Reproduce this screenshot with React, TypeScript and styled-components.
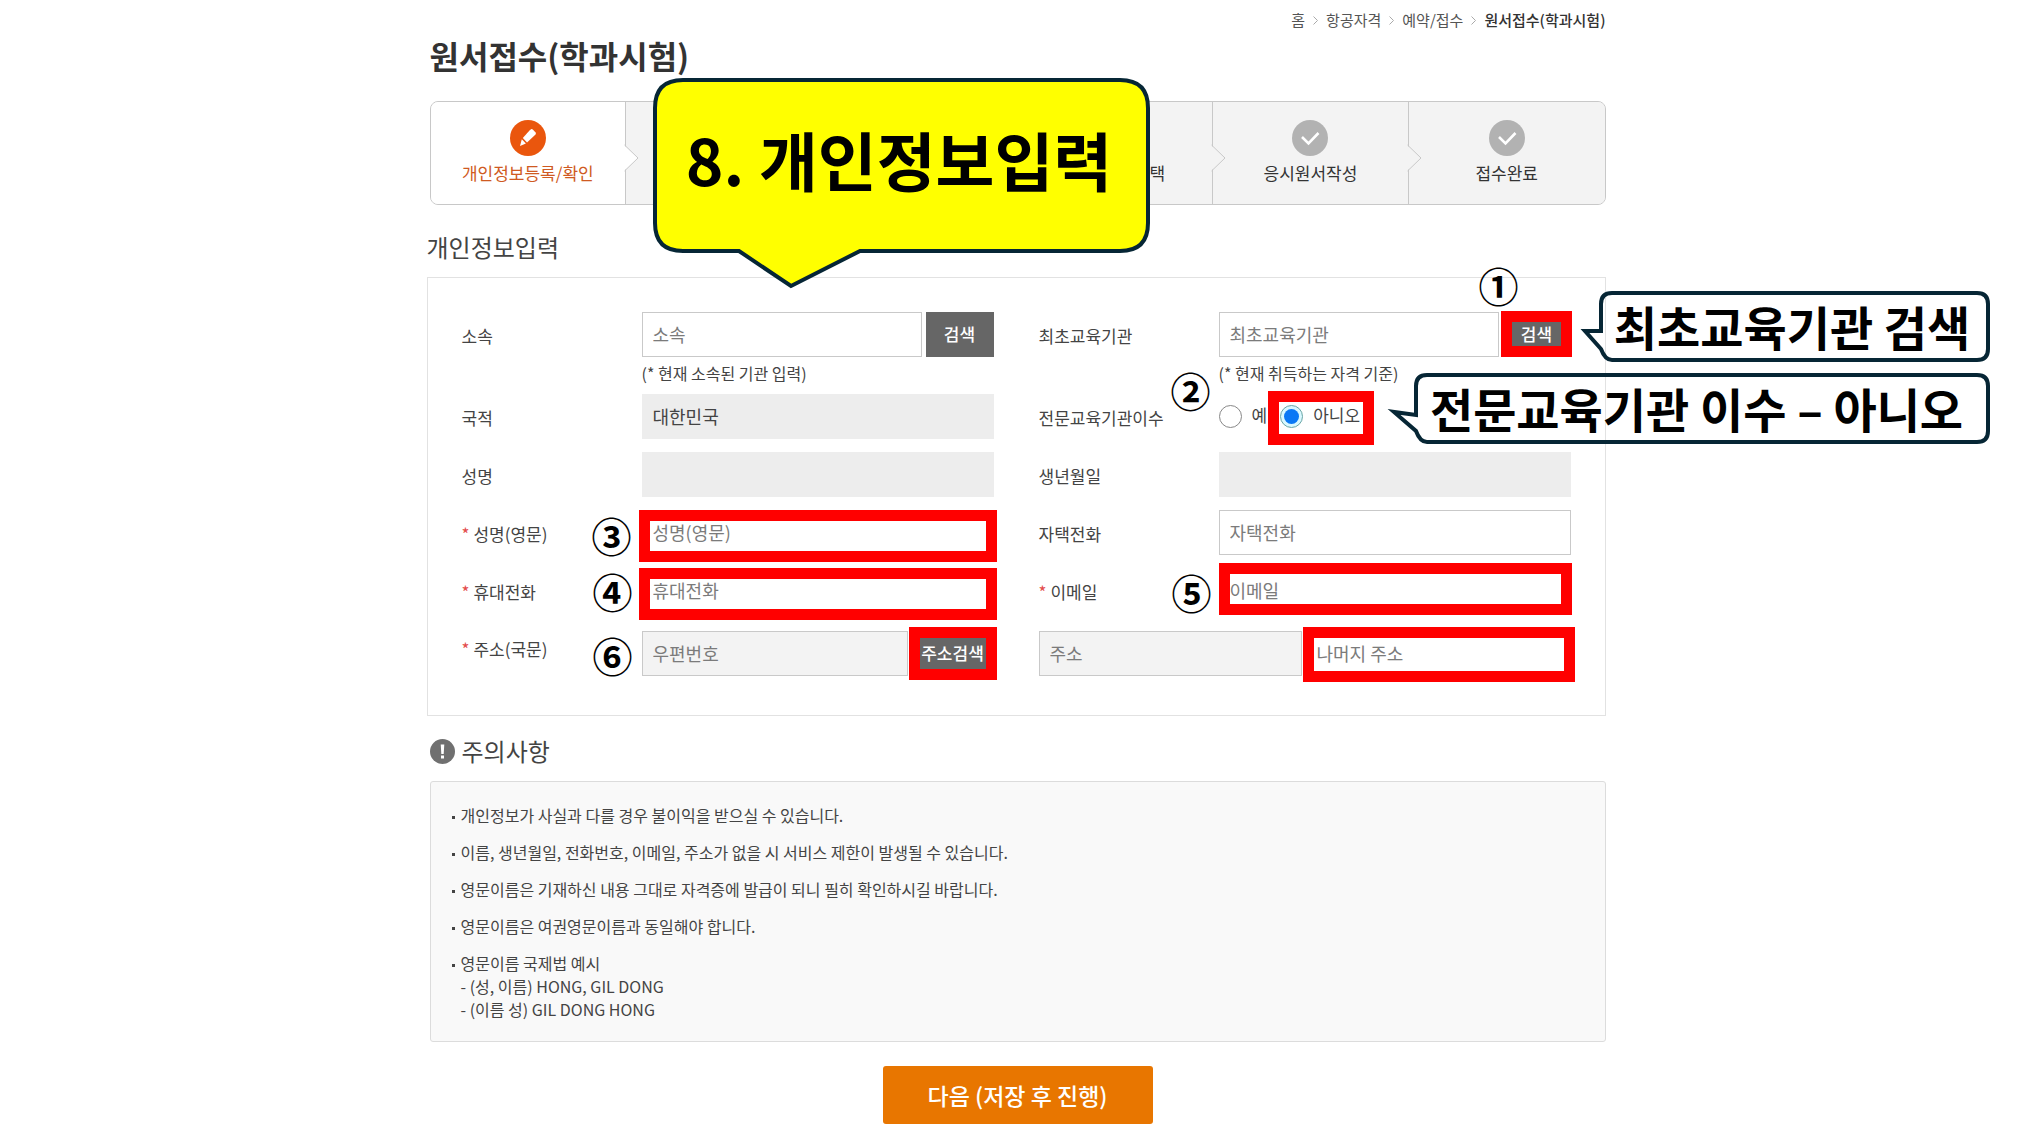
import React from "react";
import styled, { createGlobalStyle } from "styled-components";

const GlobalStyle = createGlobalStyle`
  *, *::before, *::after { box-sizing: border-box; }
  body {
    margin: 0;
    background: #fff;
    color: #444;
    font-family: "Noto Sans CJK KR", "Noto Sans", sans-serif;
    font-size: 16px;
  }
  input, button { font-family: inherit; }
`;

const Page = styled.div`
  display: flex;
  justify-content: center;
  padding-left: 5px;
`;

const Sheet = styled.main`
  position: relative;
  width: 100%;
  max-width: 1179px;
`;

const Inset = styled.div`
  margin-left: 3px;
`;

/* header */

const Breadcrumb = styled.nav`
  display: flex;
  justify-content: flex-end;
  align-items: center;
  gap: 8px;
  height: 20px;
  margin-top: 10px;
  font-size: 15px;
  line-height: 20px;
`;

const Crumb = styled.a<{ $current?: boolean }>`
  color: ${(p) => (p.$current ? "#333" : "#555")};
  font-weight: ${(p) => (p.$current ? 500 : 400)};
  text-decoration: none;
`;

const Title = styled.h1`
  margin: 5px 0 0;
  font-size: 32px;
  line-height: 40px;
  font-weight: 700;
  color: #333;
`;

const Steps = styled.ol`
  display: grid;
  grid-template-columns: repeat(6, 1fr);
  margin: 26px 0 0;
  padding: 0;
  list-style: none;
  height: 104px;
  border: 1px solid #c8c8c8;
  border-radius: 8px;
  background: #f3f3f3;
  overflow: hidden;
`;

const Step = styled.li<{ $active?: boolean }>`
  position: relative;
  display: flex;
  flex-direction: column;
  align-items: center;
  gap: 5px;
  padding-top: 18px;
  background: ${(p) => (p.$active ? "#fff" : "#f3f3f3")};
  color: ${(p) => (p.$active ? "#cf5a22" : "#333")};
  font-size: 17px;
  line-height: 24px;
  border-right: 1px solid #c8c8c8;
  &:last-child { border-right: 0; }
`;

const StepName = styled.span<{ $end?: boolean }>`
  align-self: ${(p) => (p.$end ? "flex-end" : "center")};
  padding: 0 ${(p) => (p.$end ? "47px" : "0")} 0 0;
`;

const StepArrow = styled.svg`
  position: absolute;
  top: 42px;
  right: -14px;
  z-index: 1;
`;

const SectionTitle = styled.h2`
  display: flex;
  align-items: center;
  gap: 7px;
  margin: 0;
  font-size: 24px;
  line-height: 32px;
  font-weight: 400;
  color: #444;
`;

const FormHeading = styled(SectionTitle)`
  margin-top: 26px;
`;

/* form */

const Form = styled.form`
  display: grid;
  grid-template-columns: 1fr 1fr;
  column-gap: 45px;
  row-gap: 13px;
  margin-top: 14px;
  padding: 34px 34px 39px;
  border: 1px solid #e2e2e2;
`;

const Field = styled.div<{ $last?: boolean }>`
  display: grid;
  grid-template-columns: 180px 1fr;
  align-items: start;
  margin-top: ${(p) => (p.$last ? "5px" : "0")};
`;

const Caption = styled.label<{ $high?: boolean }>`
  height: 45px;
  font-size: 17px;
  line-height: ${(p) => (p.$high ? "36px" : "48px")};
  color: #444;
`;

const Star = styled.span`
  margin-right: 4px;
  color: #e34b4b;
`;

const Control = styled.div`
  position: relative;
  display: flex;
  gap: 4px;
`;

const TextInput = styled.input<{ $tone?: "filled" | "locked" }>`
  flex: 1;
  min-width: 0;
  height: 45px;
  padding: 0 10px 2px;
  border: 1px solid ${(p) => (p.$tone === "filled" ? "#ededed" : "#c9c9c9")};
  border-radius: 0;
  background: ${(p) =>
    p.$tone === "filled" ? "#ededed" : p.$tone === "locked" ? "#f3f3f3" : "#fff"};
  color: #444;
  font-size: 18px;
  outline: none;
  &::placeholder { color: #7b7b7b; opacity: 1; }
`;

const DarkButton = styled.button`
  flex: none;
  width: 68px;
  height: 45px;
  padding: 0 0 2px;
  border: 0;
  background: #666;
  color: #fff;
  font-size: 17px;
  font-weight: 500;
  white-space: nowrap;
`;

const ZipButton = styled(DarkButton)`
  width: 82px;
`;

const Hint = styled.p`
  display: flex;
  align-items: center;
  height: 24px;
  margin: 0;
  padding-top: 8px;
  font-size: 16px;
  line-height: 24px;
  color: #444;
`;

const RadioRow = styled.div`
  position: relative;
  display: flex;
  align-items: center;
  height: 45px;
`;

const Radio = styled.input`
  appearance: none;
  display: grid;
  place-items: center;
  width: 23px;
  height: 23px;
  margin: 0;
  border: 1px solid #888;
  border-radius: 50%;
  background: #fff;
  &:checked { border-color: #6aa5a5; background: #d9f8ff; }
  &:checked::before {
    content: "";
    width: 15px;
    height: 15px;
    border-radius: 50%;
    background: #0a78f5;
  }
`;

const RadioLabel = styled.label`
  padding: 0 13px 4px 10px;
  font-size: 17px;
  line-height: 24px;
`;

const RadioPick = styled.div`
  position: relative;
  display: flex;
  align-items: center;
`;

const AddressPair = styled.div`
  position: relative;
  display: grid;
  grid-template-columns: 263px 1fr;
  gap: 4px;
  margin-top: 5px;
`;

/* notice */

const NoticeHead = styled.div`
  margin-top: 19px;
`;

const Notice = styled.ul`
  display: flex;
  flex-direction: column;
  gap: 14px;
  margin: 14px 0 0;
  padding: 22px 20px 20px 21px;
  list-style: none;
  border: 1px solid #dcdcdc;
  border-radius: 3px;
  background: #f9f9f9;
  font-size: 16px;
  line-height: 23px;
  color: #444;
`;

const NoticeItem = styled.li`
  display: grid;
  grid-template-columns: 9px 1fr;
  &::before {
    content: "";
    width: 3px;
    height: 3px;
    margin-top: 12px;
    background: #444;
  }
`;

const Actions = styled.div`
  display: flex;
  justify-content: center;
  padding: 24px 0 16px;
`;

const NextButton = styled.button`
  width: 270px;
  height: 58px;
  padding: 0;
  border: 0;
  border-radius: 3px;
  background: #e87600;
  color: #fff;
  font-size: 23px;
  font-weight: 500;
`;

/* guide marks laid over the form */

const Highlight = styled.span<{ $t: number; $r: number; $b: number; $l: number }>`
  position: absolute;
  top: ${(p) => p.$t}px;
  right: ${(p) => p.$r}px;
  bottom: ${(p) => p.$b}px;
  left: ${(p) => p.$l}px;
  border: 11px solid #f00;
  pointer-events: none;
`;

const Marker = styled.span<{ $x: number; $y: number }>`
  position: absolute;
  left: ${(p) => p.$x}px;
  top: ${(p) => p.$y}px;
  font-size: 40px;
  line-height: 40px;
  font-weight: 700;
  color: #000;
  pointer-events: none;
`;

const Callout = styled.div<{ $x: number; $y: number; $w: number; $h: number; $size: number; $pad: string }>`
  position: absolute;
  z-index: 2;
  left: ${(p) => p.$x}px;
  top: ${(p) => p.$y}px;
  width: ${(p) => p.$w}px;
  height: ${(p) => p.$h}px;
  padding: ${(p) => p.$pad};
  display: flex;
  align-items: center;
  justify-content: center;
  font-size: ${(p) => p.$size}px;
  line-height: 1;
  font-weight: 700;
  color: #000;
  white-space: nowrap;
  pointer-events: none;
`;

const Bubble = styled.svg`
  position: absolute;
  left: 0;
  top: 0;
  overflow: visible;
`;

const CalloutText = styled.span`
  position: relative;
`;

const INK = "#062635";

const Arrow = ({ active }: { active?: boolean }) => (
  <StepArrow width="15" height="28" viewBox="0 0 15 28" aria-hidden="true">
    <path d="M0 1 L14 14 L0 27 Z" fill={active ? "#fff" : "#f3f3f3"} />
    <path d="M0.500 1 L14 14 L0.500 27" fill="none" stroke="#c8c8c8" />
  </StepArrow>
);

const Chevron = () => (
  <svg width="5" height="9" viewBox="0 0 5 9" aria-hidden="true">
    <path d="M0.500 0.500 L4.500 4.500 L0.500 8.500" fill="none" stroke="#aaa" />
  </svg>
);

const PencilIcon = () => (
  <svg width="36" height="36" viewBox="0 0 36 36" aria-hidden="true">
    <circle cx="18" cy="18" r="18" fill="#ea560d" />
    <path d="M19.500 10.500 L21 9.200 Q22 8.800 23 9.800 L25.600 12.600 Q26.300 13.600 25.500 14.500 L17 22.500 L12.800 18 Z" fill="#fff" />
    <path d="M11.800 19.200 L15.900 23.500 L10 26 Z" fill="#fff" />
  </svg>
);

const CheckIcon = () => (
  <svg width="36" height="36" viewBox="0 0 36 36" aria-hidden="true">
    <circle cx="18" cy="18" r="18" fill="#b2b2b2" />
    <path d="M10 17 L16.500 23.500 L26.500 13" fill="none" stroke="#fff" strokeWidth="2.600" />
  </svg>
);

const AlertIcon = () => (
  <svg width="25" height="25" viewBox="0 0 25 25" aria-hidden="true">
    <circle cx="12.500" cy="12.500" r="12.500" fill="#707070" />
    <path d="M10.700 5.500 H14.300 L13.700 15 H11.300 Z" fill="#fff" />
    <rect x="11" y="16.500" width="3" height="3" fill="#fff" />
  </svg>
);

const STEPS = [
  { name: "개인정보등록/확인" },
  { name: "" },
  { name: "" },
  { name: "택", end: true },
  { name: "응시원서작성" },
  { name: "접수완료" },
];

const NOTICES: string[][] = [
  ["개인정보가 사실과 다를 경우 불이익을 받으실 수 있습니다."],
  ["이름, 생년월일, 전화번호, 이메일, 주소가 없을 시 서비스 제한이 발생될 수 있습니다."],
  ["영문이름은 기재하신 내용 그대로 자격증에 발급이 되니 필히 확인하시길 바랍니다."],
  ["영문이름은 여권영문이름과 동일해야 합니다."],
  ["영문이름 국제법 예시", "- (성, 이름) HONG, GIL DONG", "- (이름 성) GIL DONG HONG"],
];

const MARKERS: [string, number, number][] = [
  ["①", 1052, 265],
  ["②", 744, 370],
  ["③", 165, 515],
  ["④", 166, 571],
  ["⑤", 745, 572],
  ["⑥", 166, 635],
];

export default function App() {
  return (
    <>
      <GlobalStyle />
      <Page>
        <Sheet>
          <Inset>
            <Breadcrumb aria-label="현재 위치">
              <Crumb href="#">홈</Crumb>
              <Chevron />
              <Crumb href="#">항공자격</Crumb>
              <Chevron />
              <Crumb href="#">예약/접수</Crumb>
              <Chevron />
              <Crumb href="#" $current>원서접수(학과시험)</Crumb>
            </Breadcrumb>
            <Title>원서접수(학과시험)</Title>
            <Steps>
              {STEPS.map((step, i) => (
                <Step key={i} $active={i === 0}>
                  {i === 0 ? <PencilIcon /> : <CheckIcon />}
                  {step.name && <StepName $end={step.end}>{step.name}</StepName>}
                  {i < STEPS.length - 1 && <Arrow active={i === 0} />}
                </Step>
              ))}
            </Steps>
          </Inset>

          <FormHeading>개인정보입력</FormHeading>
          <Form>
            <Field>
              <Caption htmlFor="org">소속</Caption>
              <div>
                <Control>
                  <TextInput id="org" placeholder="소속" />
                  <DarkButton type="button">검색</DarkButton>
                </Control>
                <Hint>(* 현재 소속된 기관 입력)</Hint>
              </div>
            </Field>
            <Field>
              <Caption htmlFor="school">최초교육기관</Caption>
              <div>
                <Control>
                  <TextInput id="school" placeholder="최초교육기관" />
                  <DarkButton type="button">검색</DarkButton>
                  <Highlight $t={-1} $r={-1} $b={0} $l={282} />
                </Control>
                <Hint>(* 현재 취득하는 자격 기준)</Hint>
              </div>
            </Field>

            <Field>
              <Caption htmlFor="nation">국적</Caption>
              <Control>
                <TextInput id="nation" $tone="filled" defaultValue="대한민국" readOnly />
              </Control>
            </Field>
            <Field>
              <Caption as="span">전문교육기관이수</Caption>
              <RadioRow role="radiogroup" aria-label="전문교육기관이수">
                <Radio type="radio" name="course" id="course-yes" />
                <RadioLabel htmlFor="course-yes">예</RadioLabel>
                <RadioPick>
                  <Radio type="radio" name="course" id="course-no" defaultChecked />
                  <RadioLabel htmlFor="course-no">아니오</RadioLabel>
                  <Highlight $t={-12} $r={-1} $b={-14} $l={-12} />
                </RadioPick>
              </RadioRow>
            </Field>

            <Field>
              <Caption htmlFor="name">성명</Caption>
              <Control>
                <TextInput id="name" $tone="filled" readOnly />
              </Control>
            </Field>
            <Field>
              <Caption htmlFor="birth">생년월일</Caption>
              <Control>
                <TextInput id="birth" $tone="filled" readOnly />
              </Control>
            </Field>

            <Field>
              <Caption htmlFor="name-en"><Star>*</Star>성명(영문)</Caption>
              <Control>
                <TextInput id="name-en" placeholder="성명(영문)" />
                <Highlight $t={0} $r={-3} $b={-7} $l={-3} />
              </Control>
            </Field>
            <Field>
              <Caption htmlFor="home-tel">자택전화</Caption>
              <Control>
                <TextInput id="home-tel" placeholder="자택전화" />
              </Control>
            </Field>

            <Field>
              <Caption htmlFor="mobile"><Star>*</Star>휴대전화</Caption>
              <Control>
                <TextInput id="mobile" placeholder="휴대전화" />
                <Highlight $t={0} $r={-3} $b={-7} $l={-3} />
              </Control>
            </Field>
            <Field>
              <Caption htmlFor="email"><Star>*</Star>이메일</Caption>
              <Control>
                <TextInput id="email" placeholder="이메일" />
                <Highlight $t={-5} $r={-1} $b={-2} $l={0} />
              </Control>
            </Field>

            <Field $last>
              <Caption htmlFor="zip" $high><Star>*</Star>주소(국문)</Caption>
              <Control>
                <TextInput id="zip" $tone="locked" placeholder="우편번호" readOnly />
                <ZipButton type="button">주소검색</ZipButton>
                <Highlight $t={-4} $r={-3} $b={-4} $l={267} />
              </Control>
            </Field>
            <AddressPair>
              <TextInput aria-label="주소" $tone="locked" placeholder="주소" readOnly />
              <TextInput aria-label="나머지 주소" placeholder="나머지 주소" />
              <Highlight $t={-4} $r={-4} $b={-6} $l={264} />
            </AddressPair>
          </Form>

          <Inset>
            <NoticeHead>
              <SectionTitle><AlertIcon />주의사항</SectionTitle>
            </NoticeHead>
            <Notice>
              {NOTICES.map((lines) => (
                <NoticeItem key={lines[0]}>
                  <div>
                    {lines.map((line) => (
                      <div key={line}>{line}</div>
                    ))}
                  </div>
                </NoticeItem>
              ))}
            </Notice>
            <Actions>
              <NextButton type="button">다음 (저장 후 진행)</NextButton>
            </Actions>
          </Inset>

          {MARKERS.map(([mark, x, y]) => (
            <Marker key={mark} $x={x} $y={y}>{mark}</Marker>
          ))}

          <Callout $x={226} $y={78} $w={497} $h={175} $size={64} $pad="0 4px 16px 0">
            <Bubble width="497" height="212" viewBox="0 0 497 212" aria-hidden="true">
              <path
                d="M30 2 H467 Q495 2 495 30 V145 Q495 173 467 173 H207 L138 208 L86 173 H30 Q2 173 2 145 V30 Q2 2 30 2 Z"
                fill="#ff0"
                stroke={INK}
                strokeWidth="4"
              />
            </Bubble>
            <CalloutText>8. 개인정보입력</CalloutText>
          </Callout>

          <Callout $x={1172} $y={291} $w={391} $h={71} $size={47} $pad="0 4px 2px 0">
            <Bubble width="391" height="71" viewBox="0 0 391 71" aria-hidden="true">
              <path
                d="M13 2 H378 Q389 2 389 13 V58 Q389 69 378 69 H13 Q6 69 2 58 L-14 40 H2 V13 Q2 2 13 2 Z"
                fill="none"
                stroke={INK}
                strokeWidth="4"
              />
            </Bubble>
            <CalloutText>최초교육기관 검색</CalloutText>
          </Callout>

          <Callout $x={987} $y={373} $w={576} $h={71} $size={47} $pad="0 10px 2px 0">
            <Bubble width="576" height="71" viewBox="0 0 576 71" aria-hidden="true">
              <path
                d="M13 2 H563 Q574 2 574 13 V58 Q574 69 563 69 H13 Q6 69 2 58 L-20 39 L2 42 V13 Q2 2 13 2 Z"
                fill="none"
                stroke={INK}
                strokeWidth="4"
              />
            </Bubble>
            <CalloutText>전문교육기관 이수 – 아니오</CalloutText>
          </Callout>
        </Sheet>
      </Page>
    </>
  );
}
